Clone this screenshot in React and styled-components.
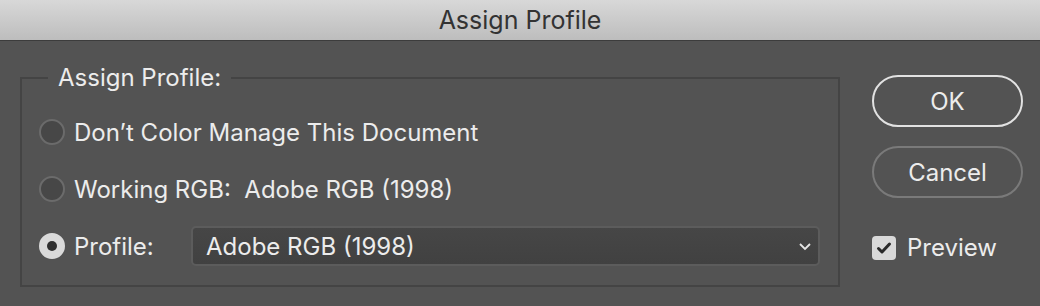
import React from "react";
import styled, { createGlobalStyle } from "styled-components";

const Global = createGlobalStyle`
  html, body { margin: 0; padding: 0; }
  body {
    background: #535353;
    font-family: "Inter", "Liberation Sans", Arial, sans-serif;
    -webkit-font-smoothing: antialiased;
  }
`;

const Window = styled.div`
  width: 1040px;
  height: 306px;
  background: #535353;
  display: flex;
  flex-direction: column;
  overflow: hidden;
`;

const TitleBar = styled.div`
  height: 40px;
  flex: none;
  background: linear-gradient(#d8d8d8, #bdbdbd);
  border-bottom: 1px solid #3c3c3c;
  display: flex;
  align-items: center;
  justify-content: center;
  font-size: 25px;
  color: #333333;
`;

const Body = styled.div`
  display: flex;
  padding: 23px 17px 0 20px;
  gap: 32px;
`;

const Group = styled.fieldset`
  margin: 0;
  width: 820px;
  height: 223px;
  box-sizing: border-box;
  border: 2px solid #444444;
  padding: 20px 18px 0 17px;
  display: flex;
  flex-direction: column;
  gap: 17px;
`;

const Legend = styled.legend`
  margin-left: 9px;
  padding: 0 10px;
  font-size: 24px;
  line-height: 28px;
  color: #ececec;
`;

const Row = styled.label`
  display: flex;
  align-items: center;
  height: 40px;
  color: #ececec;
  font-size: 24px;
`;

const Radio = styled.span`
  width: 26px;
  height: 26px;
  flex: none;
  box-sizing: border-box;
  border-radius: 50%;
  margin-right: 9px;
  display: flex;
  align-items: center;
  justify-content: center;
  border: 2px solid ${(p) => (p.$on ? "#dadada" : "#6b6b6b")};
  background: ${(p) => (p.$on ? "#dadada" : "#474747")};
  &::after {
    content: "";
    display: ${(p) => (p.$on ? "block" : "none")};
    width: 10px;
    height: 10px;
    border-radius: 50%;
    background: #2f2f2f;
  }
`;

const LabelText = styled.span`
  width: ${(p) => (p.$w ? p.$w + "px" : "auto")};
  flex: none;
  white-space: pre;
`;

const Select = styled.div`
  flex: 1;
  height: 40px;
  box-sizing: border-box;
  border: 2px solid #5c5c5c;
  border-radius: 5px;
  background: linear-gradient(#464646, #414141);
  display: flex;
  align-items: center;
  padding: 0 6px 0 13px;
  color: #ececec;
  font-size: 24px;
`;

const SelectValue = styled.span`
  flex: 1;
`;

const Side = styled.div`
  width: 151px;
  display: flex;
  flex-direction: column;
  padding-top: 11px;
`;

const Button = styled.button`
  width: 151px;
  height: 52px;
  box-sizing: border-box;
  border-radius: 26px;
  background: transparent;
  border: 2px solid ${(p) => (p.$primary ? "#e2e2e2" : "#7a7a7a")};
  color: #ececec;
  font-family: inherit;
  font-size: 24px;
  margin-bottom: ${(p) => p.$mb || 0}px;
  padding: 0;
`;

const Check = styled.label`
  display: flex;
  align-items: center;
  gap: 11px;
  margin-top: 35px;
  color: #ececec;
  font-size: 24px;
`;

const Box = styled.span`
  width: 24px;
  height: 24px;
  box-sizing: border-box;
  border-radius: 4px;
  background: #d9d9d9;
  display: flex;
  align-items: center;
  justify-content: center;
`;

export default function App() {
  return (
    <Window>
      <Global />
      <TitleBar>Assign Profile</TitleBar>
      <Body>
        <Group>
          <Legend>Assign Profile:</Legend>
          <Row>
            <Radio />
            <LabelText>Don’t Color Manage This Document</LabelText>
          </Row>
          <Row>
            <Radio />
            <LabelText>Working RGB:  Adobe RGB (1998)</LabelText>
          </Row>
          <Row>
            <Radio $on />
            <LabelText $w={117}>Profile:</LabelText>
            <Select>
              <SelectValue>Adobe RGB (1998)</SelectValue>
              <svg width="14" height="10" viewBox="0 0 14 10">
                <path d="M2 3 L7 8 L12 3" fill="none" stroke="#e6e6e6" strokeWidth="1.8" />
              </svg>
            </Select>
          </Row>
        </Group>
        <Side>
          <Button $primary $mb={19}>OK</Button>
          <Button>Cancel</Button>
          <Check>
            <Box>
              <svg width="16" height="14" viewBox="0 0 16 14">
                <path d="M2.5 7.5 L6 11 L13.5 3" fill="none" stroke="#2a2a2a" strokeWidth="3" strokeLinecap="round" strokeLinejoin="round" />
              </svg>
            </Box>
            Preview
          </Check>
        </Side>
      </Body>
    </Window>
  );
}
